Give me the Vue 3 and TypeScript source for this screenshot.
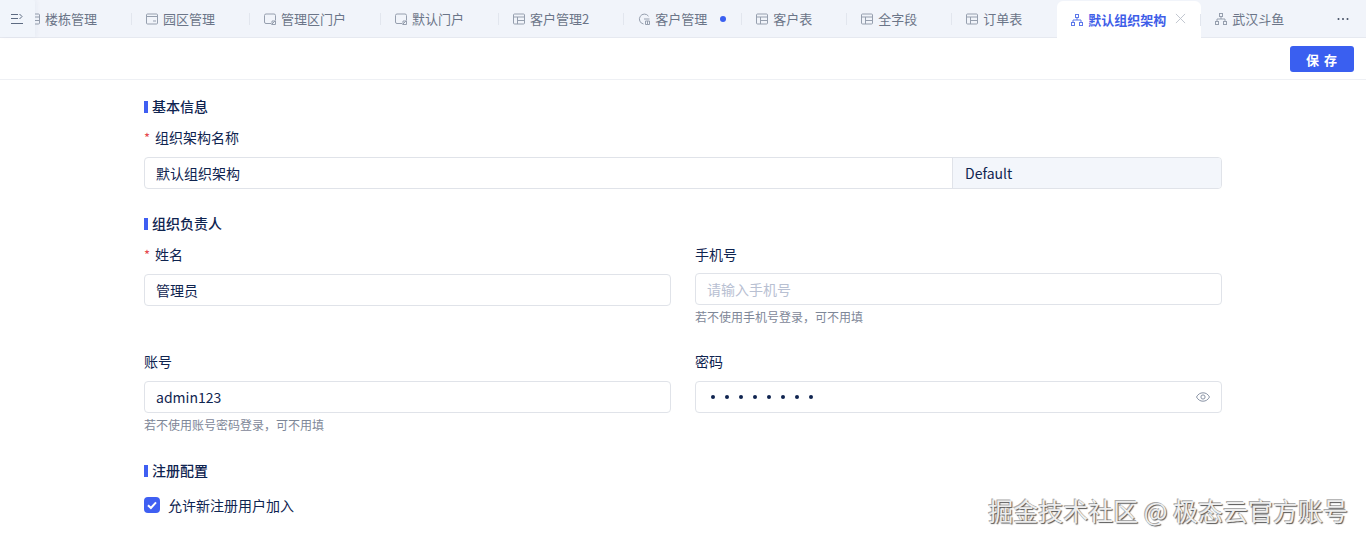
<template>
  <div class="page">
    <div class="tabbar">
      <div class="tabs">
        <div
          v-for="tab in tabs"
          :key="tab.name"
          class="tab"
          :class="{ active: tab.active, sep: tab.sep, wide: tab.wide }"
        >
          <svg class="tab-icon" viewBox="0 0 12 12" fill="none" stroke="currentColor" stroke-width="1">
            <template v-if="tab.icon === 'table'">
              <rect x="0.5" y="1" width="11" height="10" rx="1" />
              <path d="M.5 4h11M4.5 4v7M4.5 7.5h7" />
            </template>
            <template v-else-if="tab.icon === 'card'">
              <rect x="0.5" y="1" width="11" height="10" rx="1" />
              <path d="M.5 3.5h11M7 8h3" />
            </template>
            <template v-else-if="tab.icon === 'portal'">
              <path d="M7 10.5H2A1.5 1.5 0 0 1 .5 9V2.5A1.5 1.5 0 0 1 2 1h8a1.5 1.5 0 0 1 1.5 1.5V7" />
              <path d="M7.5 11.5 11.5 7.5M8 8h3.5v3.5H8z" />
            </template>
            <template v-else-if="tab.icon === 'chart'">
              <path d="M10.5 3.2A5 5 0 1 0 5.5 11" />
              <path d="M6 6h5.5M7.5 8h4v3.5h-4zM9.5 8v3.5" />
            </template>
            <template v-else>
              <rect x="4.5" y=".5" width="3" height="3" />
              <rect x=".5" y="8.5" width="3" height="3" />
              <rect x="8.5" y="8.5" width="3" height="3" />
              <path d="M6 3.5V6M2 8.5V6h8v2.5" />
            </template>
          </svg>
          <span class="tab-name">{{ tab.name }}</span>
          <i v-if="tab.dot" class="dot"></i>
          <svg v-if="tab.active" class="close" viewBox="0 0 12 12" fill="none" stroke="currentColor" stroke-width="1">
            <path d="M1 1l10 10M11 1 1 11" />
          </svg>
        </div>
      </div>
      <div class="collapse">
        <svg width="14" height="12" viewBox="0 0 14 12" fill="none" stroke="#5d6b82" stroke-width="1">
          <path d="M1 1.5h7M1 5.5h7M1 10.5h12M9.5 1 12 3.5 9.5 6" />
        </svg>
      </div>
      <svg class="more" width="12" height="4" viewBox="0 0 12 4" fill="#444f63">
        <circle cx="1.5" cy="2" r="1" />
        <circle cx="6" cy="2" r="1" />
        <circle cx="10.5" cy="2" r="1" />
      </svg>
    </div>

    <div class="toolbar">
      <button class="save">保 存</button>
    </div>

    <div class="form">
      <div class="section-title">基本信息</div>
      <div class="field">
        <div class="label"><span class="req">*</span>组织架构名称</div>
        <div class="input group">
          <div class="value grow">默认组织架构</div>
          <div class="addon">Default</div>
        </div>
      </div>

      <div class="section-title second">组织负责人</div>
      <div class="grid">
        <div class="field">
          <div class="label"><span class="req">*</span>姓名</div>
          <div class="input"><div class="value">管理员</div></div>
        </div>
        <div class="field">
          <div class="label tight">手机号</div>
          <div class="input"><div class="value placeholder">请输入手机号</div></div>
          <div class="hint">若不使用手机号登录，可不用填</div>
        </div>
        <div class="field">
          <div class="label">账号</div>
          <div class="input"><div class="value">admin123</div></div>
          <div class="hint">若不使用账号密码登录，可不用填</div>
        </div>
        <div class="field">
          <div class="label">密码</div>
          <div class="input">
            <div class="dots grow">
              <i v-for="n in 8" :key="n"></i>
            </div>
            <svg class="eye" viewBox="0 0 16 16" fill="none" stroke="#8a94a6" stroke-width="1">
              <path d="M1.5 8C3 5.2 5.2 3.8 8 3.8S13 5.2 14.5 8C13 10.8 10.8 12.2 8 12.2S3 10.8 1.5 8Z" />
              <circle cx="8" cy="8" r="2.1" />
            </svg>
          </div>
        </div>
      </div>

      <div class="section-title third">注册配置</div>
      <label class="check">
        <span class="box">
          <svg width="12" height="12" viewBox="0 0 12 12" fill="none" stroke="#fff" stroke-width="2">
            <path d="M2 6.2 4.9 9 10 3.4" />
          </svg>
        </span>
        允许新注册用户加入
      </label>
    </div>

    <div class="watermark">掘金技术社区 @ 极态云官方账号</div>
  </div>
</template>

<script setup lang="ts">
interface Tab {
  name: string
  icon: string
  active?: boolean
  dot?: boolean
  sep?: boolean
  wide?: boolean
}

const tabs: Tab[] = [
  { name: '楼栋管理', icon: 'table', sep: true },
  { name: '园区管理', icon: 'card', sep: true },
  { name: '管理区门户', icon: 'portal', sep: true },
  { name: '默认门户', icon: 'portal', sep: true },
  { name: '客户管理2', icon: 'table', sep: true },
  { name: '客户管理', icon: 'chart', dot: true, sep: true },
  { name: '客户表', icon: 'table', sep: true },
  { name: '全字段', icon: 'table', sep: true },
  { name: '订单表', icon: 'table', wide: true },
  { name: '默认组织架构', icon: 'org', active: true, sep: true },
  { name: '武汉斗鱼', icon: 'org' }
]
</script>

<style>
html,
body {
  background: #fff;
}
</style>

<style scoped>
.page {
  position: relative;
  width: 1366px;
  height: 544px;
  overflow: hidden;
  background: #fff;
  font-family: "Noto Sans CJK SC", "Noto Sans", sans-serif;
  font-size: 14px;
  color: #0f2450;
}

.tabbar {
  position: relative;
  height: 38px;
  box-sizing: border-box;
  padding-left: 14px;
  background: #f1f4fa;
  border-bottom: 1px solid #e6e9f0;
}

.tabs {
  display: flex;
  height: 38px;
}

.tab {
  position: relative;
  display: flex;
  flex: none;
  align-items: center;
  box-sizing: border-box;
  height: 38px;
  padding: 0 35px 0 14px;
  color: #6b7588;
  font-size: 13px;
}

.tab.wide {
  padding-right: 36px;
}

.tab.sep::after {
  content: "";
  position: absolute;
  right: 0;
  top: 13px;
  width: 1px;
  height: 12px;
  background: #e2e6ee;
}

.tab.active {
  height: 37px;
  margin-top: 1px;
  margin-left: -1px;
  padding-left: 14px;
  background: #fff;
  border-radius: 6px 6px 0 0;
  color: #3f5ee8;
  font-weight: 700;
}

.tab-icon {
  flex: none;
  width: 12px;
  height: 12px;
  margin-right: 5px;
  color: #969fae;
}

.tab.active .tab-icon {
  color: #5d78ea;
}

.tab-name {
  line-height: 38px;
  white-space: nowrap;
}

.dot {
  position: absolute;
  right: 16px;
  top: 16px;
  width: 6px;
  height: 6px;
  border-radius: 50%;
  background: #3a5ff0;
}

.close {
  position: absolute;
  right: 15px;
  top: 12px;
  width: 11px;
  height: 11px;
  color: #bcc2cc;
}

.collapse {
  position: absolute;
  left: 0;
  top: 0;
  display: flex;
  align-items: center;
  box-sizing: border-box;
  width: 35px;
  height: 37px;
  padding-left: 10px;
  background: #f1f5fb;
  border-top-right-radius: 2px;
  box-shadow: 2px 0 4px rgba(30, 50, 90, 0.04);
}

.more {
  position: absolute;
  right: 17px;
  top: 17px;
}

.toolbar {
  display: flex;
  justify-content: flex-end;
  align-items: center;
  height: 42px;
  box-sizing: border-box;
  padding: 1px 12px 0 0;
  border-bottom: 1px solid #eef0f4;
}

.save {
  width: 64px;
  height: 26px;
  padding: 0;
  border: 0;
  border-radius: 3px;
  background: #3a5ff0;
  color: #fff;
  font-family: inherit;
  font-size: 13px;
  font-weight: 700;
  letter-spacing: 1px;
}

.form {
  width: 1078px;
  margin-left: 144px;
  padding-top: 16px;
}

.section-title {
  position: relative;
  height: 20px;
  padding-left: 8px;
  line-height: 20px;
  font-size: 14px;
  font-weight: 500;
}

.section-title::before {
  content: "";
  position: absolute;
  left: 0;
  top: 5px;
  width: 4px;
  height: 12px;
  background: #3f5ff2;
}

.section-title.second {
  margin-top: 24px;
}

.section-title.third {
  margin-top: 13px;
}

.label {
  height: 20px;
  margin: 11px 0 10px;
  line-height: 20px;
  white-space: nowrap;
}

.label.tight {
  margin-bottom: 9px;
}

.req {
  display: inline-block;
  width: 11px;
  color: #e5484d;
  font-size: 13px;
}

.input {
  display: flex;
  align-items: center;
  height: 32px;
  box-sizing: border-box;
  border: 1px solid #e0e3e9;
  border-radius: 4px;
  background: #fff;
  overflow: hidden;
}

.value {
  padding-left: 11px;
  line-height: 30px;
}

.grow {
  flex: 1;
}

.addon {
  width: 269px;
  height: 30px;
  box-sizing: border-box;
  padding-left: 12px;
  border-left: 1px solid #e0e3e9;
  background: #f3f6fb;
  line-height: 30px;
}

.placeholder {
  color: #b8c0d2;
}

.grid {
  display: grid;
  grid-template-columns: 527px 527px;
  column-gap: 24px;
}

.grid .field {
  height: 107px;
}

.hint {
  margin-top: 2px;
  line-height: 20px;
  font-size: 12px;
  color: #7e8798;
}

.dots {
  display: flex;
  gap: 10px;
  padding-left: 15px;
}

.dots i {
  width: 4px;
  height: 4px;
  border-radius: 50%;
  background: #0f2450;
}

.eye {
  width: 16px;
  height: 16px;
  margin-right: 10px;
}

.check {
  display: flex;
  align-items: center;
  gap: 8px;
  margin-top: 15px;
  height: 20px;
}

.box {
  display: flex;
  align-items: center;
  justify-content: center;
  width: 16px;
  height: 16px;
  border-radius: 4px;
  background: #3f5ff2;
}

.watermark {
  position: absolute;
  right: 18px;
  top: 492px;
  font-size: 25px;
  line-height: 36px;
  white-space: nowrap;
  color: #eee;
  text-shadow: 1px 1px 1px #555, -1px -1px 0 #aaa;
}
</style>
